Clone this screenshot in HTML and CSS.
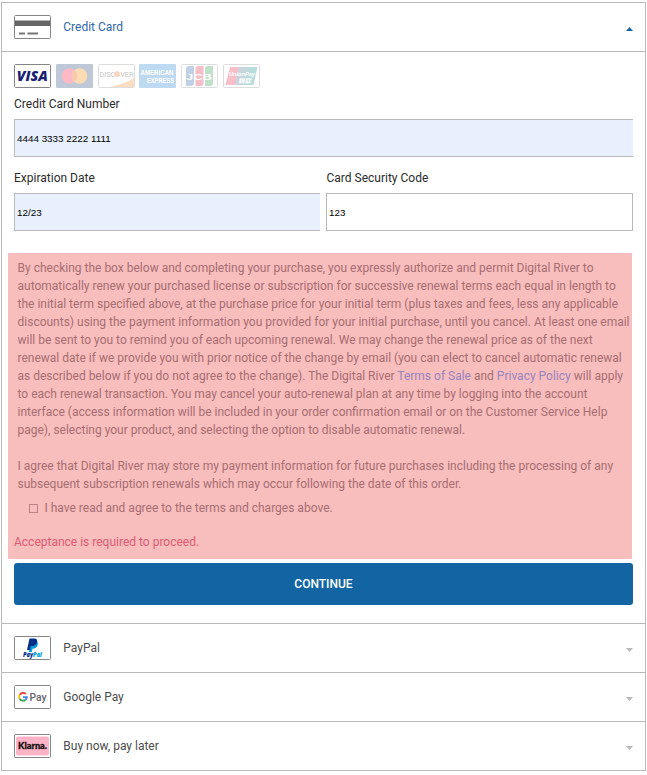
FILE: index.html
```html
<!DOCTYPE html>
<html lang="en">
<head>
<meta charset="utf-8">
<title>Payment</title>
<link rel="stylesheet" href="styles.css">
</head>
<body>
<main class="methods">
  <section class="method open">
    <header class="row">
      <svg class="logo" viewBox="0 0 37 24"><rect class="frame" x=".5" y=".5" width="36" height="23" rx="1"/><path fill="#666" d="M1 5.500h35v5.500H1z"/><path stroke="#777" stroke-width="2" d="M5 18.500h6M13.500 18.500h10.500"/></svg>
      <span class="name">Credit Card</span>
      <svg class="arrow" viewBox="0 0 7 4"><path fill="#1264a3" d="M3.500 0L7 4H0z"/></svg>
    </header>
    <div class="body">
      <div class="cards">
        <svg class="logo" viewBox="0 0 37 24"><rect class="frame" x=".5" y=".5" width="36" height="23" rx="1"/><text x="2.800" y="17" textLength="31" lengthAdjust="spacingAndGlyphs" class="visa">VISA</text></svg>
        <svg class="logo dim" viewBox="0 0 37 24"><rect width="37" height="24" rx="1" fill="#16366f"/></svg>
        <svg class="logo dim" viewBox="0 0 37 24"><rect class="frame" x=".5" y=".5" width="36" height="23" rx="1"/><path fill="#f58220" d="M36 14v9H12Q27 20 36 14"/><text x="1.500" y="13" textLength="34" lengthAdjust="spacingAndGlyphs" class="discover">DISC<tspan fill="#f26a21">O</tspan>VER</text><circle cx="19" cy="10" r="2.800" fill="#f26a21"/></svg>
        <svg class="logo dim" viewBox="0 0 37 24"><rect width="37" height="24" rx="1" fill="#1475d0"/><text x="1.500" y="11" textLength="33" lengthAdjust="spacingAndGlyphs" class="amex">AMERICAN</text><text x="8" y="19" textLength="27" lengthAdjust="spacingAndGlyphs" class="amex">EXPRESS</text></svg>
        <svg class="logo dim" viewBox="0 0 37 24"><rect class="frame" x=".5" y=".5" width="36" height="23" rx="1"/><path fill="#1557a0" d="M8 2h5v17q0 3-3 3H5V5q0-3 3-3"/><path fill="#d9163d" d="M17.500 2h5v17q0 3-3 3h-5V5q0-3 3-3"/><path fill="#159447" d="M27 2h5v17q0 3-3 3h-5V5q0-3 3-3"/><text x="5" y="15.500" textLength="26" lengthAdjust="spacingAndGlyphs" class="jcb">JCB</text></svg>
        <svg class="logo dim" viewBox="0 0 37 24"><rect class="frame" x=".5" y=".5" width="36" height="23" rx="1"/><path fill="#e21836" d="M7 3h10l-4 18H2.500z"/><path fill="#356b86" d="M16 3h10l-4 18H12z"/><path fill="#008486" d="M25 3h9.500l-4 18H21z"/><text x="6" y="12" textLength="26" lengthAdjust="spacingAndGlyphs" class="union">UnionPay</text><text x="15" y="18.500" textLength="13" lengthAdjust="spacingAndGlyphs" class="union">银联</text></svg>
        <svg class="logo rings" viewBox="0 0 37 24"><circle cx="13.500" cy="12" r="7.800" fill="#fbbac4"/><circle cx="23.500" cy="12" r="7.800" fill="#fbdcb4"/><path fill="#fbc9ad" d="M18.500 6a7.800 7.800 0 0 1 0 12a7.800 7.800 0 0 1 0-12"/></svg>
      </div>
      <div class="field">
        <label for="number">Credit Card Number</label>
        <input id="number" class="filled" value="4444 3333 2222 1111">
      </div>
      <div class="pair">
        <div class="field">
          <label for="expiry">Expiration Date</label>
          <input id="expiry" class="filled" value="12/23">
        </div>
        <div class="field">
          <label for="code">Card Security Code</label>
          <input id="code" value="123">
        </div>
      </div>
      <div class="terms">
        <p>By checking the box below and completing your purchase, you expressly authorize and permit Digital River to<br>automatically renew your purchased license or subscription for successive renewal terms each equal in length to<br>the initial term specified above, at the purchase price for your initial term (plus taxes and fees, less any applicable<br>discounts) using the payment information you provided for your initial purchase, until you cancel. At least one email<br>will be sent to you to remind you of each upcoming renewal. We may change the renewal price as of the next<br>renewal date if we provide you with prior notice of the change by email (you can elect to cancel automatic renewal<br>as described below if you do not agree to the change). The Digital River <a>Terms of Sale</a> and <a>Privacy Policy</a> will apply<br>to each renewal transaction. You may cancel your auto-renewal plan at any time by logging into the account<br>interface (access information will be included in your order confirmation email or on the Customer Service Help<br>page), selecting your product, and selecting the option to disable automatic renewal.</p>
        <p>I agree that Digital River may store my payment information for future purchases including the processing of any<br>subsequent subscription renewals which may occur following the date of this order.</p>
        <div class="agree"><span class="box"></span>I have read and agree to the terms and charges above.</div>
        <div class="error">Acceptance is required to proceed.</div>
      </div>
      <button class="continue">CONTINUE</button>
    </div>
  </section>
  <section class="method row">
    <svg class="logo" viewBox="0 0 37 24"><rect class="frame" x=".5" y=".5" width="36" height="23" rx="1"/><path fill="#009cde" d="M17.500 5h5q2 1.500 1 4.500t-5 3.200l-.7 3.300h-3z"/><path fill="#003087" d="M15.500 2.500h5q3.300.3 2.600 3.800t-5 3.800h-1.300l-.8 3.900h-3z"/><text x="9" y="20.500" textLength="19" lengthAdjust="spacingAndGlyphs" class="paypal">Pay<tspan fill="#009cde">Pal</tspan></text></svg>
    <span class="name">PayPal</span>
    <svg class="arrow" viewBox="0 0 7 4"><path fill="#b9b9b9" d="M0 0h7L3.500 4z"/></svg>
  </section>
  <section class="method row">
    <svg class="logo" viewBox="0 0 37 24"><rect class="frame" x=".5" y=".5" width="36" height="23" rx="1"/><g fill="none" stroke-width="1.900"><path stroke="#ea4335" d="M5.700 9.900A3.900 3.900 0 0 1 11.800 9"/><path stroke="#fbbc04" d="M5.700 9.900a3.900 3.900 0 0 0 0 3.800"/><path stroke="#34a853" d="M5.700 13.700a3.900 3.900 0 0 0 5.900 1"/><path stroke="#4285f4" d="M11.600 14.700a3.900 3.900 0 0 0 1.300-2.600H9"/></g><text x="15.500" y="16" textLength="17" lengthAdjust="spacingAndGlyphs" class="gpay">Pay</text></svg>
    <span class="name">Google Pay</span>
    <svg class="arrow" viewBox="0 0 7 4"><path fill="#b9b9b9" d="M0 0h7L3.500 4z"/></svg>
  </section>
  <section class="method row">
    <svg class="logo" viewBox="0 0 37 24"><rect class="frame" x=".5" y=".5" width="36" height="23" rx="1"/><rect x="2" y="2.500" width="33" height="19" rx="2" fill="#ffb3c7"/><text x="4" y="15" textLength="29" lengthAdjust="spacingAndGlyphs" class="klarna">Klarna.</text></svg>
    <span class="name">Buy now, pay later</span>
    <svg class="arrow" viewBox="0 0 7 4"><path fill="#b9b9b9" d="M0 0h7L3.500 4z"/></svg>
  </section>
</main>
</body>
</html>
```
FILE: styles.css
```css
* { box-sizing: border-box; }
body {
  margin: 0;
  background: #fff;
  font: 12px/18px Roboto, sans-serif;
  color: #2b2b2b;
}
.methods {
  width: 645px;
  margin: 2px 0 0 1px;
  border: 1px solid #b9b9b9;
}
.method + .method { border-top: 1px solid #b9b9b9; }
.row {
  display: flex;
  align-items: center;
  height: 49px;
  padding: 0 12px;
}
header.row { border-bottom: 1px solid #b9b9b9; }
.logo { display: block; width: 37px; height: 24px; flex: none; }
.frame { fill: #fff; stroke: #858585; }
.dim { opacity: .27; }
.name { flex: 1; margin-left: 12.3px; color: #4c4c4c; }
.open .name { color: #3068ab; }
.arrow { width: 7px; height: 4px; margin-top: 3px; }
.body { padding: 12px 12px 18px; }
.cards { position: relative; display: flex; gap: 4.8px; margin-bottom: 7px; }
/* Mastercard rings sit over the dimmed card */
.rings { position: absolute; left: 41.8px; top: 0; }
.field { display: flex; flex-direction: column; }
label { height: 18px; margin-bottom: 6px; }
.pair .field + .field label { padding-left: .5px; }
input {
  width: 100%;
  height: 38px;
  padding: 1px 2px;
  border: 1px solid #b9b9b9;
  border-radius: 0;
  font: 9.85px "Liberation Sans", sans-serif;
  color: #000;
  background: #fff;
}
.filled { background: #e8f0fe; border-right: 0; }
.pair { display: grid; grid-template-columns: 306px 307px; gap: 6px; margin-top: 12px; }
.terms {
  height: 306px;
  margin: 22px 1px 4px -6px;
  padding: 6px 0 0 9.5px;
  background: #f8bdbd;
  color: #a76e71;
  white-space: nowrap;
}
p { margin: 0 0 18px; }
a { color: #9985c0; }
.agree { display: flex; align-items: center; margin: -12px 0 16px 11.5px; }
.box { width: 9px; height: 9px; margin-right: 6.5px; border: 1px solid #bb8587; }
.error { margin-left: -3.5px; color: #de5b74; }
.continue {
  display: block;
  width: 100%;
  height: 42px;
  padding: 0;
  border: 0;
  border-radius: 3px;
  background: #1264a3;
  color: #fff;
  font: 500 12px Roboto, sans-serif;
}
.visa { font: italic 800 14px "Open Sans", sans-serif; fill: #1a1f71; }
.discover { font: 8px Roboto, sans-serif; fill: #222; }
.amex { font: bold 7px "Liberation Sans", sans-serif; fill: #fff; }
.jcb { font: bold 9px "Liberation Sans", sans-serif; fill: #fff; }
.union { font: italic bold 6px "Liberation Sans", "Noto Sans CJK SC", sans-serif; fill: #fff; }
.paypal { font: italic 800 6px "Open Sans", sans-serif; fill: #003087; }
.gpay { font: 500 11px Roboto, sans-serif; fill: #5f6368; }
.klarna { font: 900 8.5px Lato, sans-serif; fill: #17120f; stroke: #17120f; stroke-width: .3; }
```
